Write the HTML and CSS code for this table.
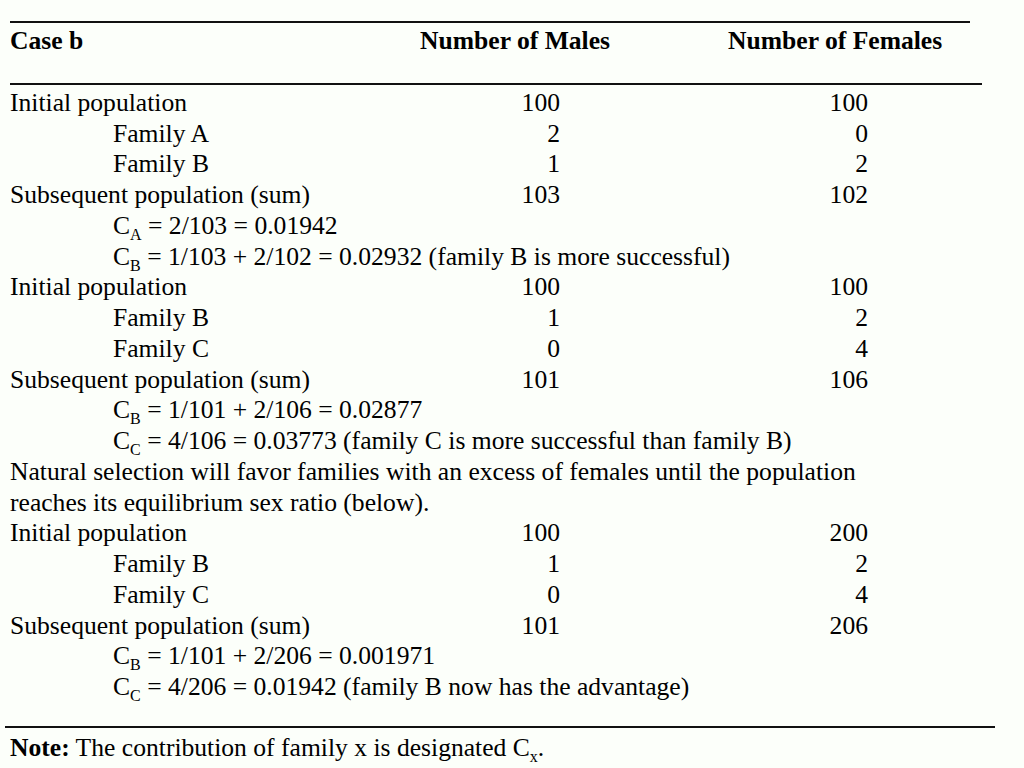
FILE: index.html
```html
<!DOCTYPE html>
<html>
<head>
<meta charset="utf-8">
<link rel="stylesheet" href="styles.css">
</head>
<body>
<div class="page">
  <div class="rule rule-top"></div>
  <div class="head">
    <div class="c-label">Case b</div>
    <div class="c-h1">Number of Males</div>
    <div class="c-h2">Number of Females</div>
  </div>
  <div class="rule rule-mid"></div>
  <div class="body">
    <div class="row"><div class="c-label">Initial population</div><div class="c-m">100</div><div class="c-f">100</div></div>
    <div class="row"><div class="c-label ind">Family A</div><div class="c-m">2</div><div class="c-f">0</div></div>
    <div class="row"><div class="c-label ind">Family B</div><div class="c-m">1</div><div class="c-f">2</div></div>
    <div class="row"><div class="c-label">Subsequent population (sum)</div><div class="c-m">103</div><div class="c-f">102</div></div>
    <div class="line ind">C<span class="sub">A</span> = 2/103 = 0.01942</div>
    <div class="line ind">C<span class="sub">B</span> = 1/103 + 2/102 = 0.02932 (family B is more successful)</div>
    <div class="row"><div class="c-label">Initial population</div><div class="c-m">100</div><div class="c-f">100</div></div>
    <div class="row"><div class="c-label ind">Family B</div><div class="c-m">1</div><div class="c-f">2</div></div>
    <div class="row"><div class="c-label ind">Family C</div><div class="c-m">0</div><div class="c-f">4</div></div>
    <div class="row"><div class="c-label">Subsequent population (sum)</div><div class="c-m">101</div><div class="c-f">106</div></div>
    <div class="line ind">C<span class="sub">B</span> = 1/101 + 2/106 = 0.02877</div>
    <div class="line ind">C<span class="sub">C</span> = 4/106 = 0.03773 (family C is more successful than family B)</div>
    <div class="line">Natural selection will favor families with an excess of females until the population</div>
    <div class="line">reaches its equilibrium sex ratio (below).</div>
    <div class="row"><div class="c-label">Initial population</div><div class="c-m">100</div><div class="c-f">200</div></div>
    <div class="row"><div class="c-label ind">Family B</div><div class="c-m">1</div><div class="c-f">2</div></div>
    <div class="row"><div class="c-label ind">Family C</div><div class="c-m">0</div><div class="c-f">4</div></div>
    <div class="row"><div class="c-label">Subsequent population (sum)</div><div class="c-m">101</div><div class="c-f">206</div></div>
    <div class="line ind">C<span class="sub">B</span> = 1/101 + 2/206 = 0.001971</div>
    <div class="line ind">C<span class="sub">C</span> = 4/206 = 0.01942 (family B now has the advantage)</div>
  </div>
  <div class="rule rule-bot"></div>
  <div class="note"><b>Note:</b> The contribution of family x is designated C<span class="sub">x</span>.</div>
</div>
</body>
</html>
```
FILE: styles.css
```css
html, body {
  margin: 0;
  padding: 0;
  background: #fcfffa;
}
body {
  width: 1024px;
  height: 768px;
  overflow: hidden;
  font-family: "Liberation Serif", "Times New Roman", serif;
  font-size: 25.6px;
  color: #000;
}
.page {
  padding-top: 21px;
}
.rule {
  height: 2px;
  background: #111;
}
.rule-top {
  margin-left: 10px;
  width: 960px;
}
.rule-mid {
  margin-left: 10px;
  width: 972px;
  margin-top: 26px;
}
.rule-bot {
  margin-left: 5px;
  width: 990px;
  margin-top: 23px;
}
.head {
  display: grid;
  grid-template-columns: 410px 308px 300px;
  padding-left: 10px;
  margin-top: 3px;
  line-height: 30.75px;
  font-weight: bold;
}
.body {
  padding-left: 10px;
  margin-top: 3px;
}
.row {
  display: grid;
  grid-template-columns: 460px 90px 308px;
  line-height: 30.75px;
}
.line {
  line-height: 30.75px;
  white-space: nowrap;
}
.c-m, .c-f {
  text-align: right;
}
.ind {
  padding-left: 103px;
}
.sub {
  font-size: 16px;
  line-height: 0;
  vertical-align: -6px;
}
.note {
  padding-left: 10px;
  margin-top: 5px;
  line-height: 30.75px;
}
```
